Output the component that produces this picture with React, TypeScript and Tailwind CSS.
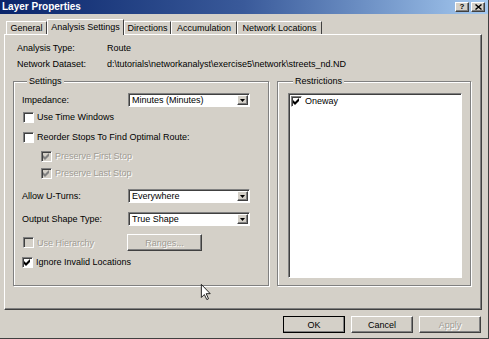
import React from "react";

const raised =
  "border border-t-white border-l-white border-r-[#404040] border-b-[#404040] shadow-[inset_-1px_-1px_0_#808080]";
const sunken =
  "border border-t-[#808080] border-l-[#808080] border-r-white border-b-white shadow-[inset_1px_1px_0_#404040]";
const disabledText = "text-[#a09c94] [text-shadow:1px_1px_0_#fff]";

function Check({ checked, disabled }: { checked?: boolean; disabled?: boolean }) {
  return (
    <span
      className={`w-[11px] h-[11px] shrink-0 flex items-center justify-center ${sunken} ${
        disabled ? "bg-[#d4d0c8]" : "bg-white"
      }`}
    >
      {checked && (
        <svg width="7" height="7" viewBox="0 0 7 7">
          <path d="M0 2 L2 4 L6 0 L6 3 L2 7 L0 5 Z" fill={disabled ? "#808080" : "#000"} />
        </svg>
      )}
    </span>
  );
}

function Combo({ value }: { value: string }) {
  return (
    <div className={`w-[122px] h-[14px] bg-white flex items-center ${sunken}`}>
      <span className="flex-1 pl-[3px] leading-[12px]">{value}</span>
      <span className={`w-[11px] h-[10px] mr-[1px] bg-[#d4d0c8] flex items-center justify-center ${raised}`}>
        <svg width="5" height="3" viewBox="0 0 5 3">
          <path d="M0 0 L5 0 L2.5 3 Z" fill="#000" />
        </svg>
      </span>
    </div>
  );
}

function Tab({ label, w, selected }: { label: string; w: string; selected?: boolean }) {
  return (
    <div
      className={`${w} flex items-center justify-center border-t border-l border-r border-t-white border-l-white border-r-[#404040] ${
        selected ? "h-[16px] relative z-10 -mb-px bg-[#d4d0c8] pb-[2px]" : "h-[13px]"
      }`}
    >
      {label}
    </div>
  );
}

function Button({ label, def, disabled }: { label: string; def?: boolean; disabled?: boolean }) {
  return (
    <div
      className={`w-[62px] h-[17px] flex items-center justify-center ${
        def ? "outline outline-1 outline-black -outline-offset-1" : ""
      } ${raised}`}
    >
      <span className={disabled ? disabledText : ""}>{label}</span>
    </div>
  );
}

export default function App() {
  return (
    <div className="relative w-[489px] h-[339px] bg-[#d4d0c8] flex flex-col overflow-hidden border-r border-b border-r-[#404040] border-b-[#404040] font-['Liberation_Sans',Arial,sans-serif] text-[9px] leading-[12px] text-black">
      {/* Title bar */}
      <div className="h-[14px] shrink-0 flex items-center pl-[2px] pr-[3px] bg-linear-to-r from-[#0a246a] via-[#3a5a9a] to-[#a6caf0]">
        <span className="text-white font-bold text-[10px] leading-[14px]">Layer Properties</span>
        <div className="ml-auto flex gap-[2px]">
          <div className={`w-[14px] h-[10px] bg-[#d4d0c8] flex items-center justify-center text-[8px] leading-[8px] font-bold ${raised}`}>
            ?
          </div>
          <div className={`w-[14px] h-[10px] bg-[#d4d0c8] flex items-center justify-center ${raised}`}>
            <svg width="7" height="6" viewBox="0 0 7 6">
              <path d="M0.5 0.5 L6.5 5.5 M6.5 0.5 L0.5 5.5" stroke="#000" strokeWidth="1.4" />
            </svg>
          </div>
        </div>
      </div>

      {/* Tabs */}
      <div className="h-[20px] shrink-0 flex items-end pl-[6px]">
        <Tab label="General" w="w-[41px]" />
        <Tab label="Analysis Settings" w="w-[77px]" selected />
        <Tab label="Directions" w="w-[47px]" />
        <Tab label="Accumulation" w="w-[66px]" />
        <Tab label="Network Locations" w="w-[85px]" />
      </div>

      {/* Panel */}
      <div className="ml-[4px] w-[478px] h-[276px] shrink-0 flex flex-col pl-[8px] pt-[7px] border border-t-white border-l-white border-r-[#404040] border-b-[#404040] shadow-[inset_-1px_-1px_0_#808080]">
        <div className="h-[12px] flex pl-[4px]">
          <span className="w-[90px]">Analysis Type:</span>
          <span>Route</span>
        </div>
        <div className="h-[12px] mt-[4px] flex pl-[4px]">
          <span className="w-[90px]">Network Dataset:</span>
          <span>d:\tutorials\networkanalyst\exercise5\network\streets_nd.ND</span>
        </div>

        <div className="flex mt-[5px]">
          {/* Settings group */}
          <fieldset className="w-[256px] h-[211px] border border-[#808080] shadow-[inset_1px_1px_0_#fff,1px_1px_0_#fff] pl-[8px] pr-0 pb-0 pt-0 m-0 flex flex-col">
            <legend className="ml-[5px] px-[2px] h-[12px] leading-[12px] bg-[#d4d0c8]">Settings</legend>
            <div className="flex items-center h-[14px] mt-[6px]">
              <span className="w-[106px]">Impedance:</span>
              <Combo value="Minutes (Minutes)" />
            </div>
            <div className="flex items-center h-[12px] mt-[4px] pl-[1px] gap-[3px]">
              <Check />
              <span>Use Time Windows</span>
            </div>
            <div className="flex items-center h-[12px] mt-[8px] pl-[1px] gap-[3px]">
              <Check />
              <span>Reorder Stops To Find Optimal Route:</span>
            </div>
            <div className="flex items-center h-[12px] mt-[7px] pl-[19px] gap-[3px]">
              <Check checked disabled />
              <span className={disabledText}>Preserve First Stop</span>
            </div>
            <div className="flex items-center h-[12px] mt-[5px] pl-[19px] gap-[3px]">
              <Check checked disabled />
              <span className={disabledText}>Preserve Last Stop</span>
            </div>
            <div className="flex items-center h-[14px] mt-[10px]">
              <span className="w-[106px]">Allow U-Turns:</span>
              <Combo value="Everywhere" />
            </div>
            <div className="flex items-center h-[14px] mt-[9px]">
              <span className="w-[106px]">Output Shape Type:</span>
              <Combo value="True Shape" />
            </div>
            <div className="flex items-center h-[17px] mt-[8px]">
              <div className="w-[105px] flex items-center gap-[3px] pl-[1px]">
                <Check disabled />
                <span className={disabledText}>Use Hierarchy</span>
              </div>
              <div className={`w-[75px] h-[17px] flex items-center justify-center ${raised}`}>
                <span className={disabledText}>Ranges...</span>
              </div>
            </div>
            <div className="flex items-center h-[12px] mt-[5px] gap-[3px]">
              <Check checked />
              <span>Ignore Invalid Locations</span>
            </div>
          </fieldset>

          {/* Restrictions group */}
          <fieldset className="ml-[8px] w-[194px] h-[211px] border border-[#808080] shadow-[inset_1px_1px_0_#fff,1px_1px_0_#fff] pl-[10px] pr-0 pb-0 pt-0 m-0 flex flex-col">
            <legend className="ml-[5px] px-[2px] h-[12px] leading-[12px] bg-[#d4d0c8]">Restrictions</legend>
            <div className={`mt-[6px] w-[174px] h-[185px] bg-white pl-[2px] pt-[1px] ${sunken}`}>
              <div className="flex items-center h-[12px] gap-[3px]">
                <Check checked />
                <span>Oneway</span>
              </div>
            </div>
          </fieldset>
        </div>
      </div>

      {/* Buttons */}
      <div className="flex justify-end gap-[6px] pr-[7px] mt-[6px]">
        <Button label="OK" def />
        <Button label="Cancel" />
        <Button label="Apply" disabled />
      </div>

      {/* Mouse cursor */}
      <svg className="absolute left-[200px] top-[284px]" width="12" height="16" viewBox="0 0 12 19">
        <path d="M0.5 0.5 L0.5 16 L4 12.5 L7 18.5 L9 17.5 L6.2 11.5 L11 11.5 Z" fill="#fff" stroke="#000" strokeWidth="1" />
      </svg>
    </div>
  );
}
